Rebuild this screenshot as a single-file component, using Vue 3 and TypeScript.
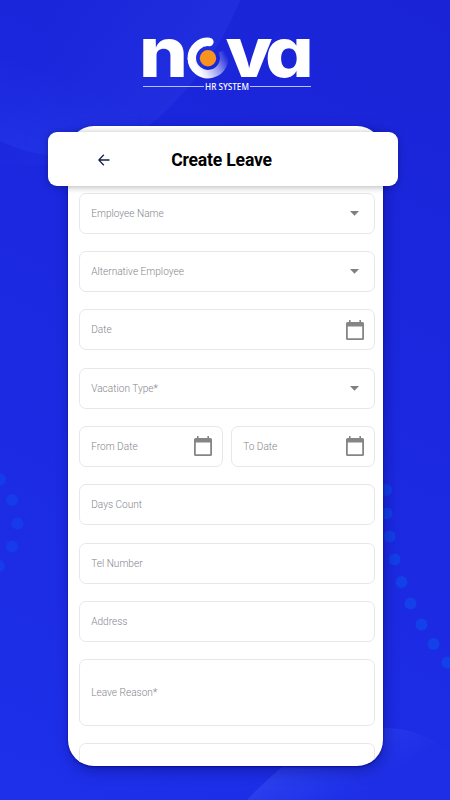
<script setup lang="ts">
type Icon = 'caret' | 'calendar' | 'none'
interface Field {
  label: string
  icon: Icon
  tall?: boolean
}

const rows: Field[][] = [
  [{ label: 'Employee Name', icon: 'caret' }],
  [{ label: 'Alternative Employee', icon: 'caret' }],
  [{ label: 'Date', icon: 'calendar' }],
  [{ label: 'Vacation Type*', icon: 'caret' }],
  [
    { label: 'From Date', icon: 'calendar' },
    { label: 'To Date', icon: 'calendar' },
  ],
  [{ label: 'Days Count', icon: 'none' }],
  [{ label: 'Tel Number', icon: 'none' }],
  [{ label: 'Address', icon: 'none' }],
  [{ label: 'Leave Reason*', icon: 'none', tall: true }],
  [{ label: '', icon: 'none' }],
]

const dots: [number, number][] = [
  [0, 479.5], [12, 500], [17.5, 523.5], [12, 546.5], [-1, 566],
  [386, 490], [386.5, 513.5], [389.5, 536.5], [394.5, 559.5], [401.5, 582],
  [410.5, 603.5], [421.5, 624.5], [433.5, 644], [447.5, 662.5],
]
</script>

<template>
  <main class="screen">
    <svg class="backdrop" viewBox="0 0 450 800" aria-hidden="true">
      <defs>
        <linearGradient id="arcTop" gradientUnits="userSpaceOnUse" x1="205" y1="70" x2="60" y2="0">
          <stop offset="0" stop-color="#4260ff" stop-opacity=".14" />
          <stop offset="1" stop-color="#4260ff" stop-opacity="0" />
        </linearGradient>
        <linearGradient id="arcLeft" gradientUnits="userSpaceOnUse" x1="20" y1="150" x2="50" y2="70">
          <stop offset="0" stop-color="#3658ff" stop-opacity=".17" />
          <stop offset="1" stop-color="#3658ff" stop-opacity="0" />
        </linearGradient>
        <linearGradient id="arcBottom" gradientUnits="userSpaceOnUse" x1="310" y1="735" x2="350" y2="800">
          <stop offset="0" stop-color="#5070ff" stop-opacity=".34" />
          <stop offset="1" stop-color="#4060ff" stop-opacity="0.02" />
        </linearGradient>
      </defs>
      <path d="M0 0H240C222 45 190 93 150 125L90 165H0Z" fill="url(#arcTop)" />
      <path d="M0 141Q22 152 48 155L130 160L160 0H0Z" fill="url(#arcLeft)" />
      <path d="M247 800C290 755 330 728 385 728C414 728 435 740 450 753V800Z" fill="url(#arcBottom)" />
      <circle v-for="([x, y], i) in dots" :key="i" :cx="x" :cy="y" r="6" :class="x < 100 ? 'dot-faint' : 'dot'" />
    </svg>

    <header class="brand">
      <svg class="logo" viewBox="0 0 170 44" role="img" aria-label="nova">
        <defs>
          <linearGradient id="swirl" gradientUnits="userSpaceOnUse" x1="54" y1="33" x2="83" y2="17">
            <stop offset="0" stop-color="#fff" />
            <stop offset=".2" stop-color="#fff" stop-opacity=".88" />
            <stop offset=".6" stop-color="#fff" stop-opacity=".5" />
            <stop offset="1" stop-color="#fff" stop-opacity="0" />
          </linearGradient>
        </defs>
        <text class="glyph" x="-4" y="40.2" textLength="49" lengthAdjust="spacingAndGlyphs">n</text>
        <path d="M48.8 21A16.2 16.2 0 1 0 79.5 13.7" fill="none" stroke="url(#swirl)" stroke-width="8.5" />
        <path d="M66.4 4.9A16.2 16.2 0 0 0 48.8 21" fill="none" stroke="#fff" stroke-width="8.5" stroke-linecap="round" />
        <circle cx="65" cy="21.2" r="8.2" fill="#f7931e" />
        <text class="glyph tight" y="40.2" transform="translate(82.4 0) scale(1.1 1)">va</text>
      </svg>
      <div class="tagline"><span>HR SYSTEM</span></div>
    </header>

    <section class="phone">
      <div class="titlebar">
        <svg class="back" viewBox="0 0 12 12"><path d="M11.5 6H.9M5.8 .8L.8 6L5.8 11.2" /></svg>
        <h1>Create Leave</h1>
      </div>
      <form class="form">
        <div v-for="(row, r) in rows" :key="r" class="row">
          <div v-for="field in row" :key="field.label" class="field" :class="{ tall: field.tall }">
            <span>{{ field.label }}</span>
            <svg v-if="field.icon === 'caret'" class="caret" viewBox="0 0 9 5"><path d="M0 0H9L4.5 4.7Z" /></svg>
            <svg v-else-if="field.icon === 'calendar'" class="calendar" viewBox="0 0 18 20">
              <path fill-rule="evenodd" d="M3 0H4.6V2H13.4V0H15V2H16.5A1.5 1.5 0 0 1 18 3.5V18.5A1.5 1.5 0 0 1 16.5 20H1.5A1.5 1.5 0 0 1 0 18.5V3.5A1.5 1.5 0 0 1 1.5 2H3ZM1.8 6.5V18.2H16.2V6.5Z" />
            </svg>
          </div>
        </div>
      </form>
    </section>
  </main>
</template>

<style>
body {
  margin: 0;
}
</style>

<style scoped>
.screen {
  position: relative;
  box-sizing: border-box;
  width: 450px;
  height: 800px;
  overflow: hidden;
  padding-top: 37px;
  background: linear-gradient(205deg, #1a24d6 0%, #1b28df 40%, #1e30ea 100%);
  font-family: Roboto, "Liberation Sans", sans-serif;
}
.backdrop {
  position: absolute;
  inset: 0;
  width: 450px;
  height: 800px;
}
.dot {
  fill: #0c55ec;
  fill-opacity: .52;
}
.dot-faint {
  fill: #0c55f4;
  fill-opacity: .38;
}
.brand {
  position: relative;
  width: 168px;
  height: 89px;
  margin-left: 143px;
}
.logo {
  display: block;
  width: 170px;
  height: 44px;
  overflow: visible;
}
.glyph {
  font-family: Inter, sans-serif;
  font-size: 69.5px;
  font-weight: 800;
  font-feature-settings: "cv11" 1;
  fill: #fff;
}
.tight {
  letter-spacing: -5.5px;
}
.tagline {
  display: flex;
  align-items: center;
  gap: 1px;
  height: 11px;
  color: #fff;
  font: 500 8.2px/11px "Noto Sans", sans-serif;
  white-space: nowrap;
}
.tagline::before,
.tagline::after {
  content: "";
  flex: 1;
  height: 1px;
  background: #b9c0f8;
}
.phone {
  position: relative;
  box-sizing: border-box;
  width: 315px;
  height: 640px;
  margin-left: 68px;
  padding-top: 6px;
  border-radius: 26px;
  background: #fff;
  box-shadow: 0 1px 2px #0a0f9a, 2px 5px 14px rgba(8, 12, 110, .45);
}
.titlebar {
  position: relative;
  z-index: 1;
  display: grid;
  grid-template-columns: 50px 1fr 50px;
  align-items: center;
  box-sizing: border-box;
  width: 350px;
  height: 54px;
  margin-left: -20px;
  padding: 0 50px;
  border-radius: 9px;
  background: #fff;
  box-shadow: 0 1px 7px rgba(0, 0, 0, .3);
}
.back {
  width: 12px;
  height: 12px;
  margin-top: 1px;
  fill: none;
  stroke: #15204c;
  stroke-width: 1.3;
}
h1 {
  margin: 0 3px 0 0;
  padding-top: 1px;
  color: #000;
  font-size: 17.6px;
  font-weight: 700;
  letter-spacing: -.2px;
  line-height: 20px;
  text-align: center;
  white-space: nowrap;
}
.form {
  display: flex;
  flex-direction: column;
  gap: 17.33px;
  box-sizing: border-box;
  height: 580px;
  padding: 6.6px 8px 0 11px;
  overflow: hidden;
  border-radius: 0 0 26px 26px;
}
.row {
  display: flex;
  flex: none;
  gap: 8px;
}
.field {
  display: flex;
  flex: 1;
  align-items: center;
  justify-content: space-between;
  box-sizing: border-box;
  height: 41px;
  padding: 0 10px 0 11.2px;
  border: 1px solid #e7e7ea;
  border-radius: 7px;
  color: #85858d;
  font-size: 10.1px;
  font-weight: 300;
  line-height: 14px;
}
.field span {
  padding-top: 1px;
}
.tall {
  height: 66.7px;
}
.caret {
  width: 9px;
  height: 5px;
  margin: 1px 5px 0 0;
  fill: #808080;
}
.calendar {
  width: 18px;
  height: 20px;
  margin: 0 .5px 0 0;
  fill: #858585;
}
</style>
